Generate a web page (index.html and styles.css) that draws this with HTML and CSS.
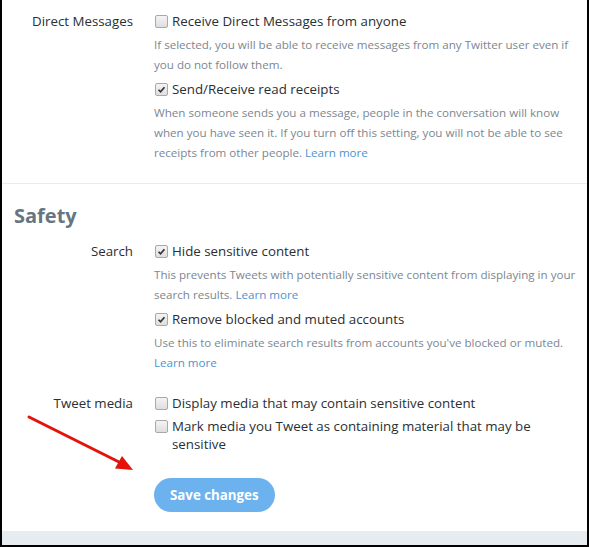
FILE: index.html
```html
<!DOCTYPE html>
<html>
<head>
<meta charset="utf-8">
<link rel="stylesheet" href="styles.css">
</head>
<body>
<div class="frame">
  <section class="group dm">
    <div class="row">
      <div class="label">Direct Messages</div>
      <div class="controls">
        <label class="check"><span class="box"></span><span class="text">Receive Direct Messages from anyone</span></label>
        <p class="help">If selected, you will be able to receive messages from any Twitter user even if you do not follow them.</p>
        <label class="check"><span class="box checked"><svg viewBox="0 0 13 13"><path d="M3 6.8 L5.4 9.2 L10 3.8" /></svg></span><span class="text">Send/Receive read receipts</span></label>
        <p class="help">When someone sends you a message, people in the conversation will know when you have seen it. If you turn off this setting, you will not be able to see receipts from other people. <a href="#">Learn more</a></p>
      </div>
    </div>
  </section>
  <section class="group safety">
    <h2 class="heading">Safety</h2>
    <div class="row">
      <div class="label">Search</div>
      <div class="controls">
        <label class="check"><span class="box checked"><svg viewBox="0 0 13 13"><path d="M3 6.8 L5.4 9.2 L10 3.8" /></svg></span><span class="text">Hide sensitive content</span></label>
        <p class="help">This prevents Tweets with potentially sensitive content from displaying in your search results. <a href="#">Learn more</a></p>
        <label class="check"><span class="box checked"><svg viewBox="0 0 13 13"><path d="M3 6.8 L5.4 9.2 L10 3.8" /></svg></span><span class="text">Remove blocked and muted accounts</span></label>
        <p class="help">Use this to eliminate search results from accounts you've blocked or muted. <a href="#">Learn more</a></p>
      </div>
    </div>
    <div class="row media">
      <div class="label">Tweet media</div>
      <div class="controls">
        <label class="check"><span class="box"></span><span class="text">Display media that may contain sensitive content</span></label>
        <label class="check"><span class="box"></span><span class="text">Mark media you Tweet as containing material that may be sensitive</span></label>
        <button class="save">Save changes</button>
      </div>
    </div>
  </section>
  <div class="footer"></div>
  <svg class="arrow" width="140" height="80" viewBox="0 0 140 80">
    <line x1="27" y1="17" x2="119" y2="63" stroke="#e3120b" stroke-width="3" stroke-linecap="round"/>
    <polygon points="131,70 113,68.5 120,56" fill="#e3120b"/>
  </svg>
</div>
</body>
</html>
```
FILE: styles.css
```css
html, body {
  margin: 0;
  padding: 0;
  background: #fff;
}
.frame {
  position: relative;
  width: 589px;
  height: 547px;
  box-sizing: border-box;
  border: 2px solid #000;
  border-top: none;
  display: flex;
  flex-direction: column;
  font-family: "Open Sans", "Noto Sans", sans-serif;
  color: #14171a;
  overflow: hidden;
}
.group {
  padding-right: 8px;
}
.dm {
  padding-top: 12px;
  padding-bottom: 20px;
  border-bottom: 1px solid #e6ecf0;
}
.safety {
  padding-top: 20px;
}
.heading {
  margin: 0 0 14px 12px;
  font-size: 20px;
  line-height: 24px;
  font-weight: 700;
  color: #66757f;
}
.row {
  display: grid;
  grid-template-columns: 131px 1fr;
  column-gap: 21px;
}
.row.media {
  margin-top: 21px;
}
.label {
  text-align: right;
  font-size: 13.3px;
  line-height: 18px;
  color: #292f33;
}
.controls {
  display: flex;
  flex-direction: column;
  align-items: flex-start;
}
.check {
  display: flex;
  align-items: flex-start;
  font-size: 13.3px;
  line-height: 18px;
  color: #292f33;
}
.check + .check {
  margin-top: 5px;
}
.box {
  flex: none;
  width: 11px;
  height: 11px;
  margin: 3px 4px 0 1px;
  border: 1px solid #a9a9a9;
  border-radius: 2px;
  background: linear-gradient(#f4f4f4, #dedede);
  display: flex;
}
.box svg {
  width: 11px;
  height: 11px;
}
.box svg path {
  fill: none;
  stroke: #333;
  stroke-width: 2;
}
.help {
  margin: 5px 0 5px;
  font-size: 11.6px;
  line-height: 20px;
  color: #7b8792;
}
.help:last-child {
  margin-bottom: 0;
}
.help a {
  color: #4a94d1;
  text-decoration: none;
}
.save {
  margin-top: 25px;
  height: 34px;
  padding: 0 16px;
  border: none;
  border-radius: 17px;
  background: #6cb2ef;
  color: #fff;
  font-family: "Open Sans", "Noto Sans", sans-serif;
  font-size: 13.3px;
  font-weight: 700;
}
.footer {
  margin-top: auto;
  height: 14px;
  background: #e6ecf0;
}
.arrow {
  position: absolute;
  left: 0;
  top: 400px;
}
```
